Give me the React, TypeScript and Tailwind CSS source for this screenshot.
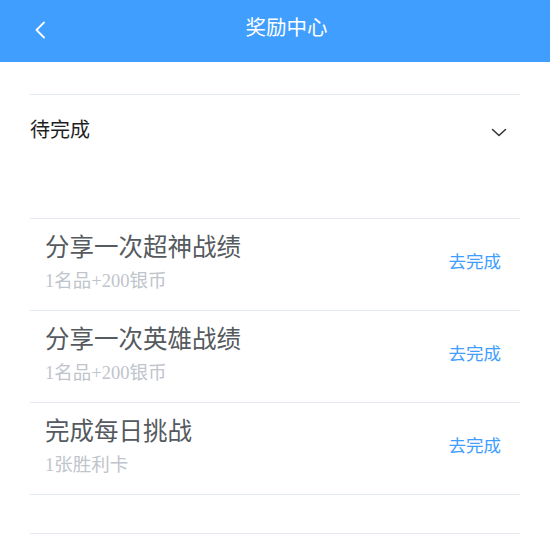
import React from "react";

type Task = {
  id: string;
  title: string;
  reward: string;
};

const TASKS: Task[] = [
  { id: "legend", title: "分享一次超神战绩", reward: "1名品+200银币" },
  { id: "hero", title: "分享一次英雄战绩", reward: "1名品+200银币" },
  { id: "daily", title: "完成每日挑战", reward: "1张胜利卡" },
];

const FONT = "font-['Liberation_Serif','Noto_Sans_CJK_SC',serif]";

function BackIcon() {
  return (
    <svg width="12" height="18" viewBox="0 0 12 18" fill="none">
      <path d="M10 1.5 L2.5 9 L10 16.5" stroke="white" strokeWidth="1.8" strokeLinecap="round" strokeLinejoin="round" />
    </svg>
  );
}

function ChevronDown() {
  return (
    <svg width="16" height="9" viewBox="0 0 16 9" fill="none">
      <path d="M1.5 1.5 L8 7.5 L14.5 1.5" stroke="#303133" strokeWidth="1.5" strokeLinecap="round" strokeLinejoin="round" />
    </svg>
  );
}

export default function App() {
  return (
    <div className={`min-h-[535px] w-[550px] bg-white ${FONT}`}>
      <header className="relative flex h-[62px] items-center justify-center bg-[#409eff] pb-[6px] pl-[23px]">
        <button type="button" className="absolute left-[34px] top-[21px]">
          <BackIcon />
        </button>
        <h1 className="text-[20.5px] leading-none text-white">奖励中心</h1>
      </header>

      <div className="mt-[32px] px-[30px]">
        <div className="h-[125px] border-y border-[#e4e8f0]">
          <div className="flex items-start justify-between pt-[21px]">
            <div className="text-[20px] leading-[28px] text-[#1f1f1f]">待完成</div>
            <div className="mr-[13px] pt-[12px]">
              <ChevronDown />
            </div>
          </div>
        </div>

        {TASKS.map((task) => (
          <div key={task.id} className="flex h-[92px] justify-between border-b border-[#e4e8f0]">
            <div className="pl-[15px] pt-[13px]">
              <div className="text-[24.5px] leading-[32px] text-[#555a60]">{task.title}</div>
              <div className="mt-[5px] text-[18.5px] leading-[24px] text-[#c0c4cc]">{task.reward}</div>
            </div>
            <button type="button" className="mr-[19px] mb-[5px] self-center text-[17.5px] text-[#409eff]">
              去完成
            </button>
          </div>
        ))}

        <div className="mt-[38px] border-t border-[#e4e8f0]" />
      </div>
    </div>
  );
}
